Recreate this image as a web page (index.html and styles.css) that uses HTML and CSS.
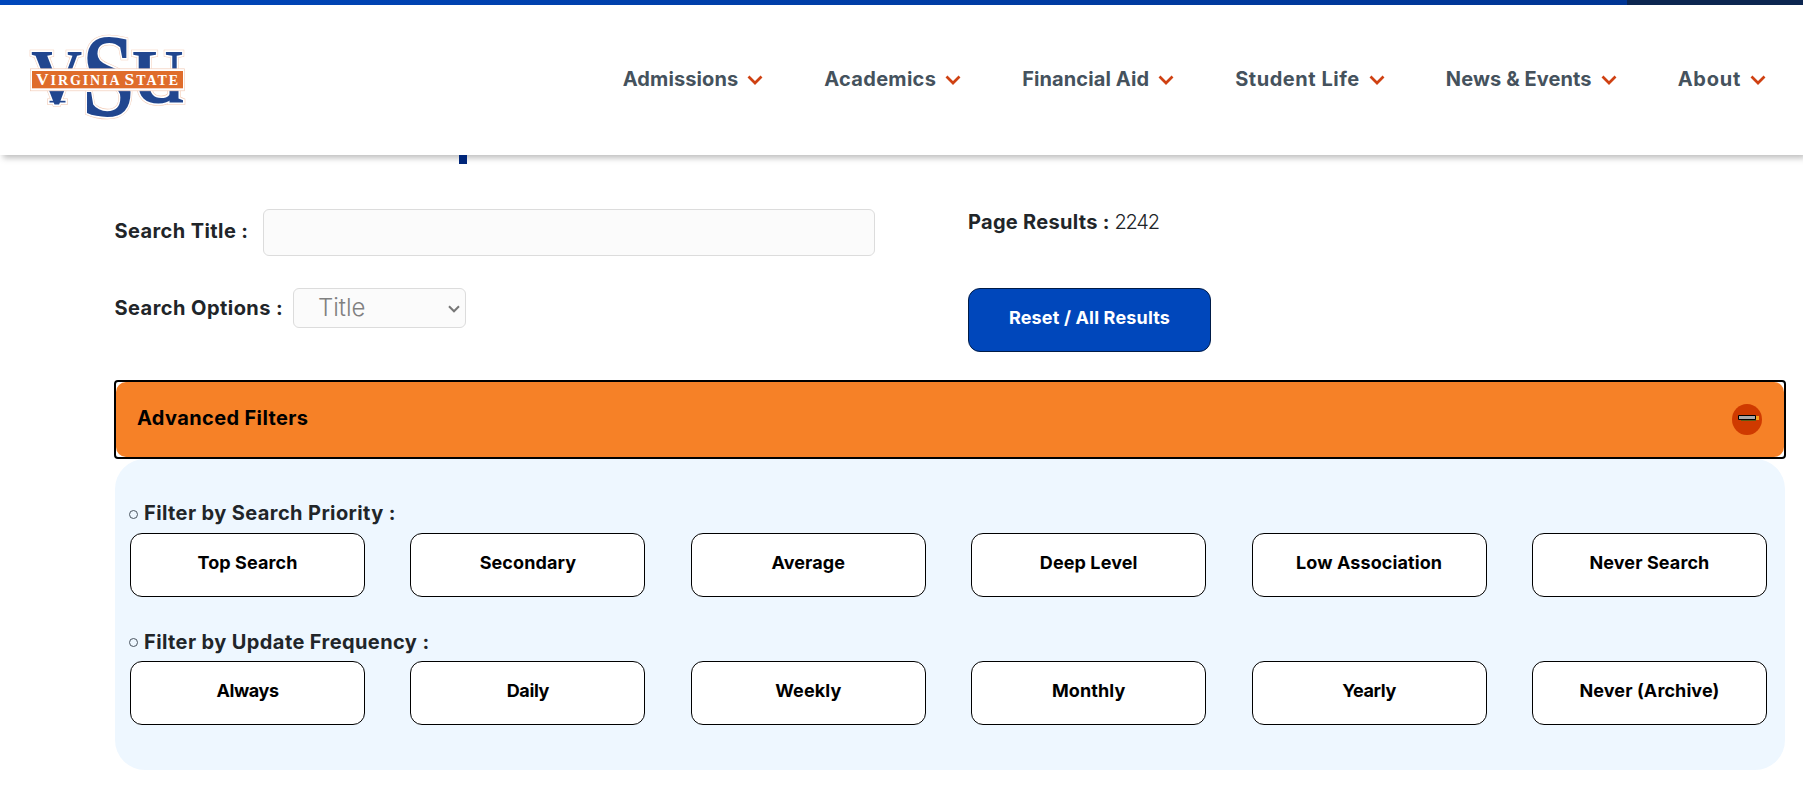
FILE: index.html
```html
<!DOCTYPE html>
<html lang="en">
<head>
<meta charset="utf-8">
<title>Virginia State University</title>
<link rel="stylesheet" href="styles.css">
</head>
<body>
<header class="header">
  <div class="topbar"><span class="topbar-main"></span><span class="topbar-end"></span></div>
  <div class="masthead">
    <svg class="logo" viewBox="25 30 165 95" width="165" height="95" role="img" aria-label="Virginia State">
      <defs>
        <g id="letters">
          <text transform="translate(31 102.5) scale(.91 1)" font-size="78">V</text>
          <rect x="49.500" y="100.800" width="16" height="1.700"/>
          <text transform="translate(131.500 102.500) scale(.93 1)" font-size="78">U</text>
          <path d="M169.500 84h9v14.500l4.500 1.800v2.200h-13.500z"/>
          <text transform="translate(82 115.800) scale(.8 1)" font-size="118">S</text>
        </g>
      </defs>
      <use href="#letters" class="logo-edge"/>
      <use href="#letters" class="logo-white"/>
      <use href="#letters" class="logo-blue"/>
      <rect x="30.500" y="68.800" width="154" height="22" class="logo-rim"/>
      <rect x="32" y="71" width="151" height="17.300" class="logo-band"/>
      <text class="logo-name" x="36" y="85.200" textLength="142" lengthAdjust="spacing"><tspan font-size="17.500">V</tspan>IRGINIA<tspan font-size="17.500" dx="3">S</tspan>TATE</text>
    </svg>
    <nav class="nav">
      <a class="nav-item"><span class="t10">Admissions</span><svg class="chev" viewBox="0 0 16 10"><path d="M1.500 1.500 8 8l6.500-6.500"/></svg></a>
      <a class="nav-item"><span class="t30">Academics</span><svg class="chev" viewBox="0 0 16 10"><path d="M1.500 1.500 8 8l6.500-6.500"/></svg></a>
      <a class="nav-item"><span class="t10">Financial Aid</span><svg class="chev" viewBox="0 0 16 10"><path d="M1.500 1.500 8 8l6.500-6.500"/></svg></a>
      <a class="nav-item"><span class="t55">Student Life</span><svg class="chev" viewBox="0 0 16 10"><path d="M1.500 1.500 8 8l6.500-6.500"/></svg></a>
      <a class="nav-item"><span class="t10">News &amp; Events</span><svg class="chev" viewBox="0 0 16 10"><path d="M1.500 1.500 8 8l6.500-6.500"/></svg></a>
      <a class="nav-item"><span class="t75">About</span><svg class="chev" viewBox="0 0 16 10"><path d="M1.500 1.500 8 8l6.500-6.500"/></svg></a>
    </nav>
  </div>
</header>
<main class="main">
  <div class="title-tail"></div>
  <section class="search">
    <div class="fields">
      <label class="field"><span class="label">Search Title :</span><input class="text-input" type="text"></label>
      <div class="field"><span class="label">Search Options :</span>
        <div class="select"><span>Title</span><svg viewBox="0 0 12 8" width="12" height="8"><path d="M1 1.200 6 6.300l5-5.100"/></svg></div>
      </div>
    </div>
    <div class="results">
      <div class="count"><span class="label">Page Results :</span><span class="number">2242</span></div>
      <button class="btn reset">Reset / All Results</button>
    </div>
  </section>
  <section class="filters">
    <div class="accordion"><div class="accordion-head"><span>Advanced Filters</span>
      <svg viewBox="0 0 30 31" width="30" height="31"><ellipse cx="15" cy="15.500" rx="15" ry="15.500" fill="#cf3a00"/><path d="M9 12h18v4H9z" fill="#f6a21c"/><path d="M9 15h15v2H9z" fill="#5f5a13"/><path d="M6.500 11.500h17v4h-17z" fill="#aaa" stroke="#000"/></svg>
    </div></div>
    <div class="panel">
      <h2 class="group"><i></i><span>Filter by Search Priority :</span></h2>
      <div class="row">
        <button class="btn">Top Search</button><button class="btn">Secondary</button><button class="btn">Average</button><button class="btn">Deep Level</button><button class="btn">Low Association</button><button class="btn">Never Search</button>
      </div>
      <h2 class="group second"><i></i><span>Filter by Update Frequency :</span></h2>
      <div class="row">
        <button class="btn tight">Always</button><button class="btn tight">Daily</button><button class="btn">Weekly</button><button class="btn">Monthly</button><button class="btn tight">Yearly</button><button class="btn">Never (Archive)</button>
      </div>
    </div>
  </section>
</main>
</body>
</html>
```
FILE: styles.css
```css
* { box-sizing: border-box; }
body { margin: 0; height: 785px; overflow: hidden; background: #fff; color: #212529; font: 700 20px/24px Inter, "Liberation Sans", sans-serif; }

.header { height: 155px; background: #fff; box-shadow: 3px 3px 6px rgba(0, 0, 0, .26); }
.topbar { display: flex; height: 5px; }
.topbar-main { width: 1627px; background: linear-gradient(90deg, #0047bb, #003594); }
.topbar-end { flex: 1; background: #0c2650; }
.masthead { display: flex; justify-content: space-between; height: 150px; padding: 25px 37px 0 25px; }
.logo { flex: none; font-family: "Liberation Serif", serif; }
.logo-edge { fill: #f3cdb8; stroke: #f3cdb8; stroke-width: 4.600px; }
.logo-white { fill: #fff; stroke: #fff; stroke-width: 3.400px; }
.logo-blue { fill: #21468f; }
.logo-rim { fill: #fff; stroke: #f3cdb8; stroke-width: .7px; }
.logo-band { fill: #df6c2b; }
.logo-name { fill: #fff; font-size: 14px; }

.nav { display: flex; gap: 61px; height: 46px; margin-top: 27px; color: #45525d; }
.nav-item { display: flex; gap: 9px; height: 46px; }
.nav-item span { padding-top: 10px; white-space: nowrap; }
.t10 { letter-spacing: .1px; }
.t30 { letter-spacing: .3px; }
.t55 { letter-spacing: .55px; }
.t75 { letter-spacing: .75px; }
.chev { width: 16px; height: 10px; margin-top: 18px; fill: none; stroke: #cf4112; stroke-width: 2.700px; }

.main { padding: 0 17px 0 114px; }
.title-tail { width: 8px; height: 9px; margin-left: 345px; background: #00267a; }
.search { display: flex; height: 216px; padding-top: 45px; }
.fields { width: 854px; }
.field { display: flex; align-items: flex-start; }
.label { letter-spacing: .4px; white-space: nowrap; }
.field .label { flex: none; width: 134px; margin-left: .5px; padding-top: 10px; }
.text-input { width: 612px; height: 47px; margin-left: 14.500px; border: 1px solid #dcdcdc; border-radius: 6px; background: #fbfbfb; }
.fields .field + .field { margin-top: 32px; }
.field + .field .label { width: 168.500px; padding-top: 8px; letter-spacing: .45px; }
.select { display: flex; justify-content: space-between; width: 173px; height: 40px; margin-left: 10px; padding: 6px 5px 0 24px; border: 1px solid #dcdcdc; border-radius: 6px; background: #fbfbfb; color: #808080; font-weight: 300; font-size: 24px; line-height: 26px; }
.select svg { margin-top: 10px; fill: none; stroke: #777; stroke-width: 2px; }
.count { display: flex; height: 79px; padding-top: 1px; }
.count .label { width: 142.500px; letter-spacing: .3px; }
.number { margin-left: 4px; font-weight: 300; letter-spacing: -1.200px; }
.btn { display: block; width: 235px; height: 64px; padding: 0 0 4px; border: 1px solid #000; border-radius: 12px; background: #fff; color: #000; font: 700 18px/22px Inter, "Liberation Sans", sans-serif; letter-spacing: .1px; white-space: nowrap; }
.btn.tight { letter-spacing: -.4px; }
.btn.reset { width: 243px; background: #0047bb; border-color: #001b47; color: #fff; letter-spacing: .17px; }

.accordion { height: 79px; border: 2px solid #000; border-radius: 4px; background: #fff; }
.accordion-head { display: flex; align-items: center; justify-content: space-between; height: 75px; padding: 0 22px 0 21px; border-radius: 10px; background: #f68127; color: #000; letter-spacing: .37px; }
.accordion-head span { margin-top: -4px; }
.accordion-head svg { margin-top: -1px; }
.panel { height: 311px; margin: 0 1px; padding: 42px 18px 0 15px; border-radius: 30px; background: #eef7ff; }
.group { display: flex; height: 32px; margin: 0; font-size: 20px; font-weight: 700; letter-spacing: .4px; }
.group i { width: 9px; height: 9px; margin: 9px 6px 0 -1px; border: 1px solid #4a5560; border-radius: 50%; }
.group.second { margin-top: 32px; }
.group.second span { padding-top: 1px; }
.row { display: flex; justify-content: space-between; }
```
